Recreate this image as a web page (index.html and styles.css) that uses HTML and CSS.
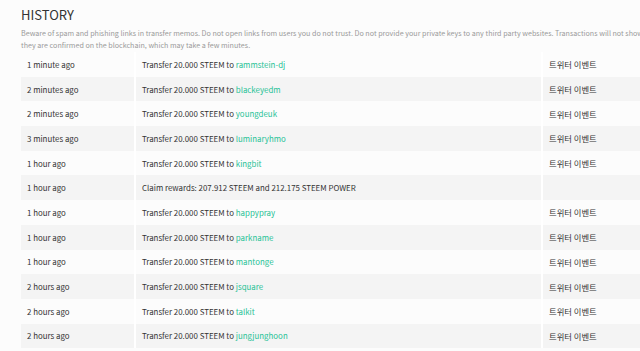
FILE: index.html
```html
<!DOCTYPE html>
<html lang="en">
<head>
<meta charset="utf-8">
<link rel="stylesheet" href="styles.css">
</head>
<body>
<div class="page">
  <h4 class="title">HISTORY</h4>
  <p class="warning">Beware of spam and phishing links in transfer memos. Do not open links from users you do not trust. Do not provide your private keys to any third party websites. Transactions will not show until they are confirmed on the blockchain, which may take a few minutes.</p>
  <table class="history">
    <colgroup><col class="c-time"><col class="c-desc"><col class="c-memo"></colgroup>
    <tbody>
      <tr><td>1 minute ago</td><td>Transfer 20.000 STEEM to <a href="#">rammstein-dj</a></td><td>트위터 이벤트</td></tr>
      <tr><td>2 minutes ago</td><td>Transfer 20.000 STEEM to <a href="#">blackeyedm</a></td><td>트위터 이벤트</td></tr>
      <tr><td>2 minutes ago</td><td>Transfer 20.000 STEEM to <a href="#">youngdeuk</a></td><td>트위터 이벤트</td></tr>
      <tr><td>3 minutes ago</td><td>Transfer 20.000 STEEM to <a href="#">luminaryhmo</a></td><td>트위터 이벤트</td></tr>
      <tr><td>1 hour ago</td><td>Transfer 20.000 STEEM to <a href="#">kingbit</a></td><td>트위터 이벤트</td></tr>
      <tr><td>1 hour ago</td><td>Claim rewards: 207.912 STEEM and 212.175 STEEM POWER</td><td></td></tr>
      <tr><td>1 hour ago</td><td>Transfer 20.000 STEEM to <a href="#">happypray</a></td><td>트위터 이벤트</td></tr>
      <tr><td>1 hour ago</td><td>Transfer 20.000 STEEM to <a href="#">parkname</a></td><td>트위터 이벤트</td></tr>
      <tr><td>1 hour ago</td><td>Transfer 20.000 STEEM to <a href="#">mantonge</a></td><td>트위터 이벤트</td></tr>
      <tr><td>2 hours ago</td><td>Transfer 20.000 STEEM to <a href="#">jsquare</a></td><td>트위터 이벤트</td></tr>
      <tr><td>2 hours ago</td><td>Transfer 20.000 STEEM to <a href="#">talkit</a></td><td>트위터 이벤트</td></tr>
      <tr><td>2 hours ago</td><td>Transfer 20.000 STEEM to <a href="#">jungjunghoon</a></td><td>트위터 이벤트</td></tr>
    </tbody>
  </table>
</div>
</body>
</html>
```

FILE: styles.css
```css
html, body {
  margin: 0;
  padding: 0;
  background: #fcfcfc;
  overflow: hidden;
}
body {
  font-family: "Noto Sans CJK KR", sans-serif;
  color: #333;
}
.page {
  padding: 7px 0 0 21px;
  width: 760px;
}
.title {
  margin: 0;
  font-size: 13px;
  font-weight: 400;
  line-height: 16px;
  color: #333;
}
.warning {
  margin: 4px 0 0;
  width: 646px;
  font-size: 7.15px;
  line-height: 12px;
  color: #9a9a9a;
}
.history {
  margin-top: 1px;
  border-collapse: collapse;
  width: 740px;
  table-layout: fixed;
  font-size: 7.9px;
}
.c-time { width: 114px; }
.c-desc { width: 407px; }
.history td {
  height: 24.7px;
  padding: 0 6px;
  box-sizing: border-box;
  border-left: 2px solid #fff;
  white-space: nowrap;
  background: #fcfcfc;
}
.history td:first-child { border-left: 0; }
.history td:last-child { font-size: 8.3px; }
.history tr:nth-child(even) td { background: #f4f4f4; }
.history a {
  color: #27c296;
  text-decoration: none;
}
```
